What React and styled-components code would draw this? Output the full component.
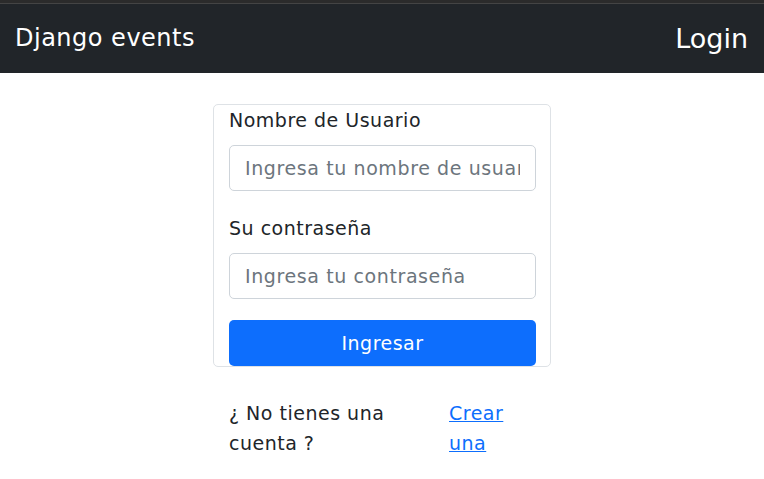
import React from 'react';
import styled, { createGlobalStyle } from 'styled-components';

const GlobalStyle = createGlobalStyle`
  body {
    margin: 0;
    font-family: 'DejaVu Sans', 'Noto Sans', sans-serif;
    background: #fff;
    color: #212529;
  }
`;

const Navbar = styled.nav`
  height: 70px;
  background: #212529;
  border-top: 3px solid #2b2b2b;
  box-shadow: inset 0 1px 0 #444;
  display: flex;
  align-items: center;
  justify-content: space-between;
  padding: 0 16px 0 15px;
  color: #fff;
`;

const Brand = styled.div`
  font-size: 24px;
  letter-spacing: 0.5px;
`;

const NavTitle = styled.div`
  font-size: 27px;
`;

const Main = styled.main`
  display: flex;
  flex-direction: column;
  align-items: center;
  padding-top: 31px;
  letter-spacing: 0.5px;
`;

const Card = styled.form`
  width: 338px;
  box-sizing: border-box;
  border: 1px solid #dee2e6;
  border-radius: 5px;
  padding: 0 14px 0 15px;
  display: flex;
  flex-direction: column;
`;

const Label = styled.label`
  font-size: 19px;
  line-height: 30px;
  margin-top: ${(p) => p.$top || 0}px;
  margin-bottom: 10px;
`;

const Input = styled.input`
  height: 46px;
  box-sizing: border-box;
  border: 1px solid #ced4da;
  border-radius: 5px;
  padding: 0 15px;
  font-family: inherit;
  font-size: 19px;
  letter-spacing: 0.6px;
  color: #212529;
  &::placeholder {
    color: #6c757d;
  }
`;

const Button = styled.button`
  margin-top: 21px;
  height: 46px;
  border: none;
  border-radius: 5px;
  background: #0d6efd;
  color: #fff;
  font-family: inherit;
  font-size: 19px;
  letter-spacing: 0.5px;
  cursor: pointer;
`;

const Footer = styled.div`
  width: 338px;
  box-sizing: border-box;
  padding: 0 16px;
  margin-top: 31px;
  display: grid;
  grid-template-columns: 220px 72px;
  font-size: 19px;
  line-height: 30px;
`;

const Question = styled.div`
  max-width: 190px;
`;

const Link = styled.a`
  color: #0d6efd;
  text-decoration: underline;
`;

export default function App() {
  return (
    <>
      <GlobalStyle />
      <Navbar>
        <Brand>Django events</Brand>
        <NavTitle>Login</NavTitle>
      </Navbar>
      <Main>
        <Card onSubmit={(e) => e.preventDefault()}>
          <Label>Nombre de Usuario</Label>
          <Input placeholder="Ingresa tu nombre de usuario" />
          <Label $top={22}>Su contraseña</Label>
          <Input type="password" placeholder="Ingresa tu contraseña" />
          <Button type="submit">Ingresar</Button>
        </Card>
        <Footer>
          <Question>¿ No tienes una cuenta ?</Question>
          <div>
            <Link href="#">Crear una</Link>
          </div>
        </Footer>
      </Main>
    </>
  );
}
